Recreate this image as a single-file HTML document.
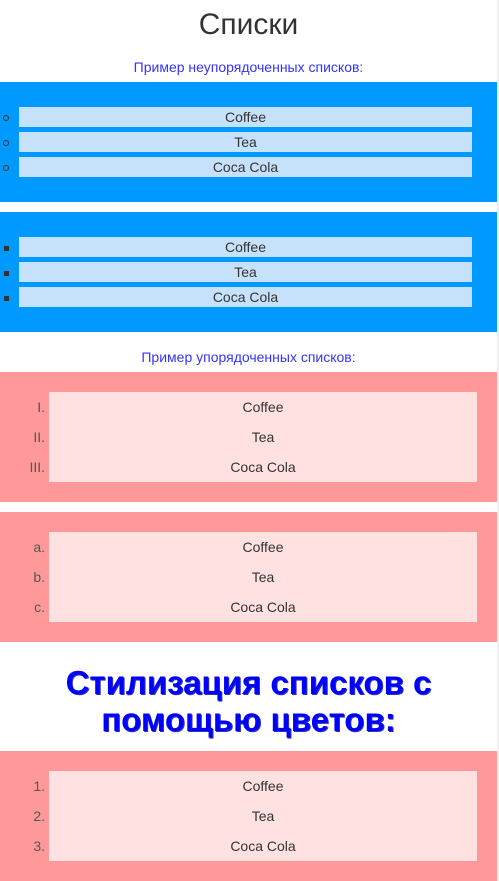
<!DOCTYPE html>
<html><head><meta charset="utf-8"><style>
html,body{margin:0;padding:0;background:#fff;width:499px;height:881px;overflow:hidden;font-family:"Liberation Sans",Arial,sans-serif;}
.page{position:relative;width:497px;height:881px;}
.sb{position:absolute;left:497px;top:0;width:2px;height:881px;background:#f0f0f0;}
.t{position:absolute;left:0;width:497px;text-align:center;}
.blue{position:absolute;left:0;width:497px;height:120px;background:#0099ff;}
.bi{position:absolute;left:19px;width:453px;height:20px;background:#c6e2fb;color:#333;font-size:14px;line-height:20px;text-align:center;}
.circ{position:absolute;left:3px;width:4px;height:4px;border:1px solid #333;border-radius:50%;}
.sq{position:absolute;left:4px;width:5px;height:5px;background:#333;}
.pink{position:absolute;left:0;width:497px;height:130px;background:#ff9999;}
.pi{position:absolute;left:49px;top:20px;width:428px;height:90px;background:#ffe1e1;}
.pi div{height:30px;line-height:30px;text-align:center;color:#333;font-size:14px;}
.num{position:absolute;right:452px;color:#555;font-size:14px;line-height:30px;}
</style></head><body><div class="page">
<div class="t" style="top:7px;font-size:30px;color:#333;line-height:36px;">Списки</div>
<div class="t" style="top:59px;font-size:14px;color:#3333ff;line-height:16px;">Пример неупорядоченных списков:</div>

<div class="blue" style="top:82px;">
<span class="circ" style="top:33px"></span><span class="circ" style="top:58px"></span><span class="circ" style="top:83px"></span>
<div class="bi" style="top:25px">Coffee</div><div class="bi" style="top:50px">Tea</div><div class="bi" style="top:75px">Coca Cola</div>
</div>
<div class="blue" style="top:212px;">
<span class="sq" style="top:34px"></span><span class="sq" style="top:59px"></span><span class="sq" style="top:84px"></span>
<div class="bi" style="top:25px">Coffee</div><div class="bi" style="top:50px">Tea</div><div class="bi" style="top:75px">Coca Cola</div>
</div>

<div class="t" style="top:349px;font-size:14px;color:#3333ff;line-height:16px;">Пример упорядоченных списков:</div>

<div class="pink" style="top:372px;">
<span class="num" style="top:20px">I.</span><span class="num" style="top:50px">II.</span><span class="num" style="top:80px">III.</span>
<div class="pi"><div>Coffee</div><div>Tea</div><div>Coca Cola</div></div>
</div>
<div class="pink" style="top:512px;">
<span class="num" style="top:20px">a.</span><span class="num" style="top:50px">b.</span><span class="num" style="top:80px">c.</span>
<div class="pi"><div>Coffee</div><div>Tea</div><div>Coca Cola</div></div>
</div>

<div class="t" style="top:664px;font-size:33px;font-weight:bold;color:#0000ff;line-height:37px;text-shadow:1px 1px 0 #3333aa;">Стилизация списков с<br>помощью цветов:</div>

<div class="pink" style="top:751px;">
<span class="num" style="top:20px">1.</span><span class="num" style="top:50px">2.</span><span class="num" style="top:80px">3.</span>
<div class="pi"><div>Coffee</div><div>Tea</div><div>Coca Cola</div></div>
</div>
<div class="sb"></div>
</div></body></html>
